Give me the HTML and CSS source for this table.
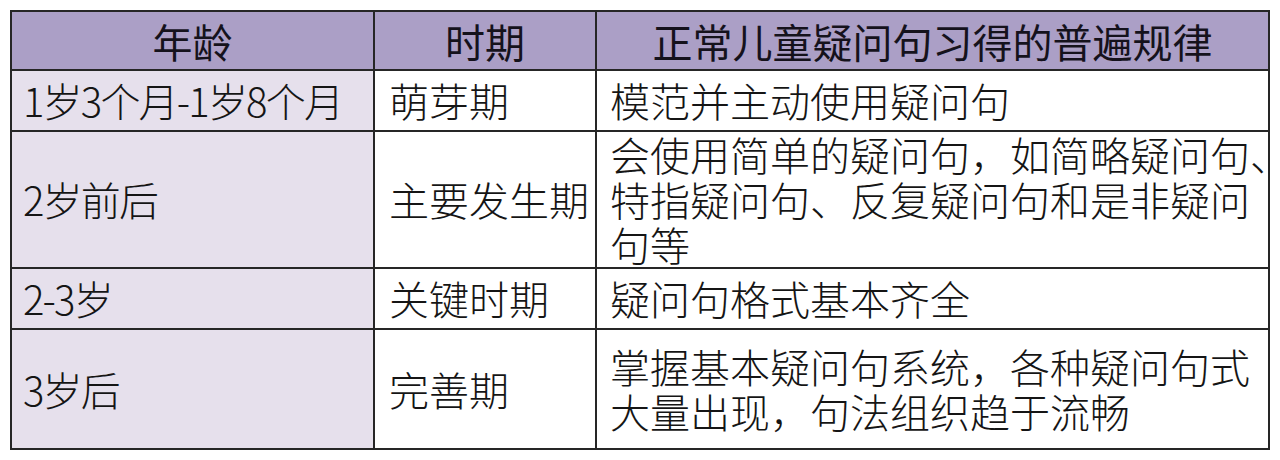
FILE: index.html
```html
<!DOCTYPE html>
<html lang="zh-CN">
<head>
<meta charset="utf-8">
<title>正常儿童疑问句习得的普遍规律</title>
<link rel="stylesheet" href="styles.css">
</head>
<body>
<div class="table">
  <div class="cell head">年龄</div>
  <div class="cell head">时期</div>
  <div class="cell head">正常儿童疑问句习得的普遍规律</div>

  <div class="cell age">1岁3个月-1岁8个月</div>
  <div class="cell period">萌芽期</div>
  <div class="cell desc">模范并主动使用疑问句</div>

  <div class="cell age">2岁前后</div>
  <div class="cell period">主要发生期</div>
  <div class="cell desc multi"><span class="line">会使用简单的疑问句，如简略疑问句、</span><span class="line">特指疑问句、反复疑问句和是非疑问</span><span class="line">句等</span></div>

  <div class="cell age">2-3岁</div>
  <div class="cell period">关键时期</div>
  <div class="cell desc">疑问句格式基本齐全</div>

  <div class="cell age">3岁后</div>
  <div class="cell period">完善期</div>
  <div class="cell desc multi"><span class="line">掌握基本疑问句系统，各种疑问句式</span><span class="line">大量出现，句法组织趋于流畅</span></div>
</div>
</body>
</html>
```

FILE: styles.css
```css
html, body {
  margin: 0;
  padding: 0;
  background: #ffffff;
}

body {
  padding: 10px 0 0 10px;
  font-family: "Noto Sans CJK SC", "Noto Sans", sans-serif;
  color: #151515;
}

.table {
  width: 1260px;
  box-sizing: border-box;
  display: grid;
  grid-template-columns: 361px 220px 671px;
  grid-template-rows: 57px 59px 135px 59px 118px;
  gap: 2px;
  padding: 2px;
  background: #262626;
}

.cell {
  display: flex;
  align-items: center;
  font-size: 40px;
  line-height: 45px;
  font-weight: 300;
  white-space: nowrap;
  overflow: hidden;
  background: #ffffff;
}

.head {
  justify-content: center;
  overflow: visible;
  line-height: 44px;
  background: #ab9fc6;
  font-weight: 400;
  color: #15121c;
}

.age {
  background: #e6e0ec;
  padding-left: 11px;
  letter-spacing: -1.8px;
}

.period {
  padding-left: 14px;
}

.desc {
  padding-left: 13px;
}

.multi {
  flex-direction: column;
  align-items: flex-start;
  justify-content: center;
}

.line {
  display: block;
}
```
